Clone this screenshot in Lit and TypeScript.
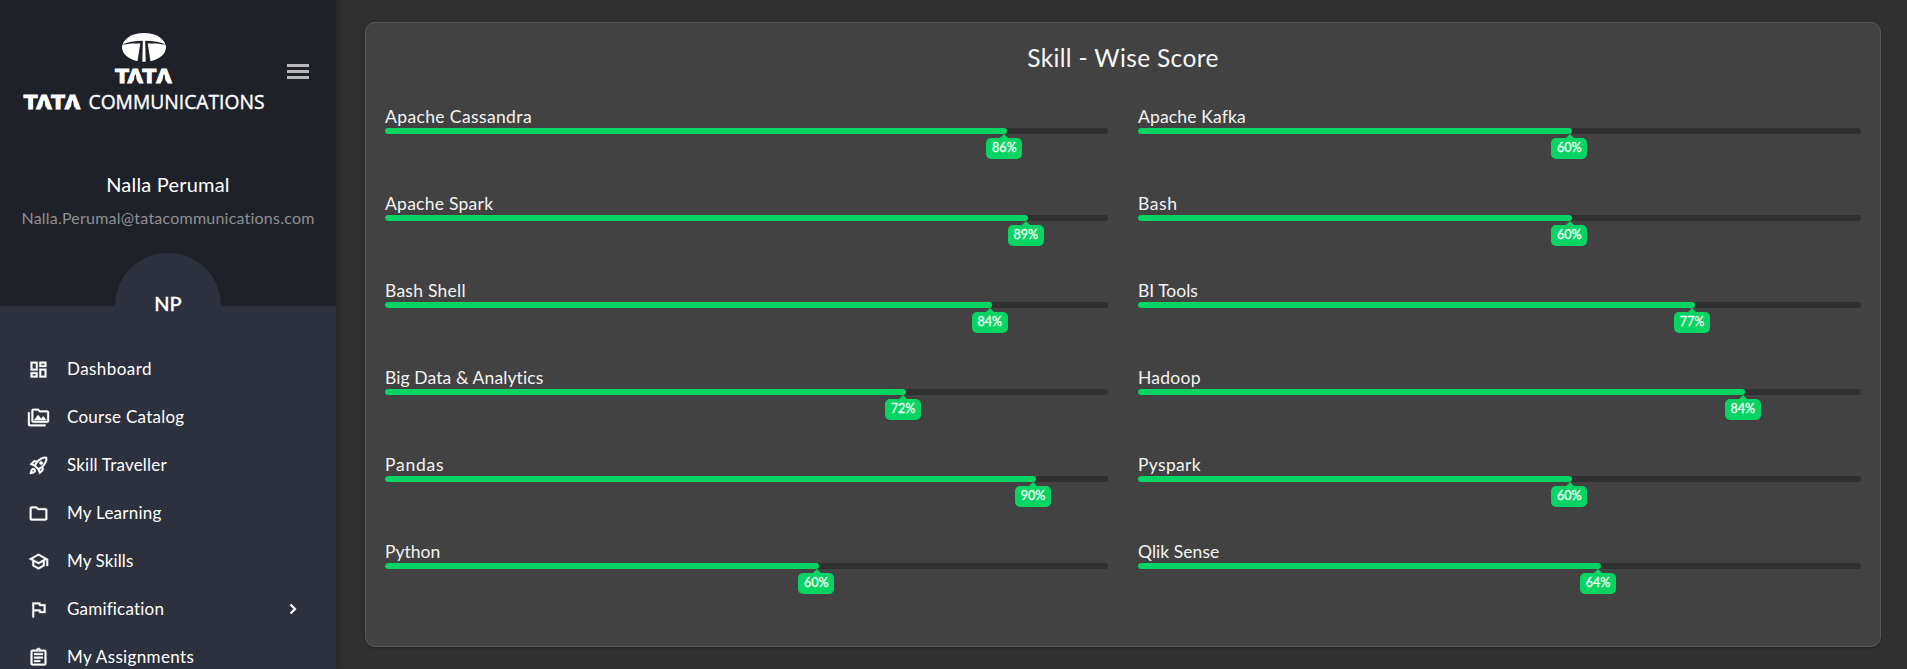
import { LitElement, html, css, svg } from "lit";
import { customElement, property } from "lit/decorators.js";
import { styleMap } from "lit/directives/style-map.js";

const ICONS = {
  dashboard:
    "M19 5v2h-4V5h4M9 5v6H5V5h4m10 8v6h-4v-6h4M9 17v2H5v-2h4M21 3h-8v6h8V3zM11 3H3v10h8V3zm10 8h-8v10h8V11zm-10 4H3v6h8v-6z",
  catalog:
    "M2 6H0v5h.01L0 20c0 1.1.9 2 2 2h18v-2H2V6zm5 9h14l-3.5-4.5-2.5 3.01L11.5 9zM22 4h-8l-2-2H6c-1.1 0-1.99.9-1.99 2L4 16c0 1.1.9 2 2 2h16c1.1 0 2-.9 2-2V6c0-1.1-.9-2-2-2zm0 12H6V4h5.17l1.41 1.41.59.59H22v10z",
  rocket:
    "M6 15c-.83 0-1.58.34-2.12.88C2.7 17.06 2 22 2 22s4.94-.7 6.12-1.88A2.996 2.996 0 0 0 6 15zm.71 3.71c-.28.28-2.17.76-2.17.76s.47-1.88.76-2.17c.17-.19.42-.3.7-.3a1.003 1.003 0 0 1 .71 1.71zm10.71-5.06c6.36-6.36 4.24-11.31 4.24-11.31S16.71.22 10.35 6.58l-2.49-.5a2.03 2.03 0 0 0-1.81.55L2 10.69l5 2.14L11.17 17l2.14 5 4.05-4.05c.47-.47.68-1.15.55-1.81l-.49-2.49zM7.41 10.83l-1.91-.82 1.97-1.97 1.44.29c-.57.83-1.08 1.7-1.5 2.5zm6.58 7.67-.82-1.91c.8-.42 1.67-.93 2.49-1.5l.29 1.44-1.96 1.97zM16 12.24c-1.32 1.32-3.38 2.4-4.04 2.73l-2.93-2.93c.32-.65 1.4-2.71 2.73-4.04 4.68-4.68 8.23-3.99 8.23-3.99s.69 3.55-3.99 8.23zM15 11c1.1 0 2-.9 2-2s-.9-2-2-2-2 .9-2 2 .9 2 2 2z",
  folder:
    "M9.17 6l2 2H20v10H4V6h5.17M10 4H4c-1.1 0-1.99.9-1.99 2L2 18c0 1.1.9 2 2 2h16c1.1 0 2-.9 2-2V8c0-1.1-.9-2-2-2h-8l-2-2z",
  school:
    "M12 3L1 9l4 2.18v6L12 21l7-3.82v-6l2-1.09V17h2V9L12 3zm6.82 6L12 12.72 5.18 9 12 5.28 18.82 9zM17 15.99l-5 2.73-5-2.73v-3.72L12 15l5-2.73v3.72z",
  flag:
    "M12.36 6l.4 2H18v6h-3.36l-.4-2H7V6h5.36M14 4H5v17h2v-7h5.6l.4 2h7V6h-5.6L14 4z",
  assignment:
    "M7 15h7v2H7zm0-4h10v2H7zm0-4h10v2H7zm12-4h-4.18C14.4 1.84 13.3 1 12 1s-2.4.84-2.82 2H5c-1.1 0-2 .9-2 2v14c0 1.1.9 2 2 2h14c1.1 0 2-.9 2-2V5c0-1.1-.9-2-2-2zm-7-.25c.41 0 .75.34.75.75s-.34.75-.75.75-.75-.34-.75-.75.34-.75.75-.75zM19 19H5V5h14v14z",
};

interface NavItem {
  label: string;
  icon: keyof typeof ICONS;
  tracking: number;
  nested?: boolean;
}

const NAV: NavItem[] = [
  { label: "Dashboard", icon: "dashboard", tracking: 0.45 },
  { label: "Course Catalog", icon: "catalog", tracking: 0.26 },
  { label: "Skill Traveller", icon: "rocket", tracking: 0.2 },
  { label: "My Learning", icon: "folder", tracking: 0.25 },
  { label: "My Skills", icon: "school", tracking: 0.1 },
  { label: "Gamification", icon: "flag", tracking: 0.2, nested: true },
  { label: "My Assignments", icon: "assignment", tracking: 0.36 },
];

interface Skill {
  name: string;
  score: number;
  tracking: number;
}

const SKILLS: Skill[] = [
  { name: "Apache Cassandra", score: 86, tracking: 0.38 },
  { name: "Apache Kafka", score: 60, tracking: 0.16 },
  { name: "Apache Spark", score: 89, tracking: 0.26 },
  { name: "Bash", score: 60, tracking: 0.6 },
  { name: "Bash Shell", score: 84, tracking: 0.25 },
  { name: "BI Tools", score: 77, tracking: 0 },
  { name: "Big Data & Analytics", score: 72, tracking: 0.11 },
  { name: "Hadoop", score: 84, tracking: 0.25 },
  { name: "Pandas", score: 90, tracking: 0.75 },
  { name: "Pyspark", score: 60, tracking: 0.32 },
  { name: "Python", score: 60, tracking: 0 },
  { name: "Qlik Sense", score: 64, tracking: 0.05 },
];

/** Crossbar-free wordmark: the notches open each A down to its baseline. */
const wordmark = (x: number, y: number) => svg`
  <g transform="translate(${x} ${y})">
    <text class="tata" x="-0.2 12.2 27.2 40.8" y="14.4">TATA</text>
    <path class="notch" d="M19.9 5.6L22.3 15H17.5zM48.5 5.6L50.9 15H46.1z" />
  </g>`;

@customElement("brand-logo")
class BrandLogo extends LitElement {
  static styles = css`
    :host { display: block; width: 244px; height: 84px; }
    svg { display: block; overflow: visible; }
    .white { fill: #fff; }
    .notch { fill: #1f2129; }
    .tata { font: 700 20px "DejaVu Sans", sans-serif; fill: #fff; stroke: #fff; stroke-width: 1; }
    .name { font: 400 20px "Open Sans", sans-serif; fill: #fff; stroke: #fff; stroke-width: 0.4; }
  `;
  render() {
    return html`<svg width="244" height="92" viewBox="0 0 244 92" role="img" aria-label="Tata Communications">
      <ellipse class="white" cx="120" cy="22.4" rx="22" ry="14.4" />
      <path class="notch" d="M96 20.4C103 17 111 15.8 118.8 15.8L118.3 38H113.2L116.3 18.6C109 18.2 103 18.6 96 20.4z" />
      <path class="notch" d="M144 20.4C137 17 129 15.8 121.2 15.8L121.7 38H126.8L123.7 18.6C131 18.2 137 18.6 144 20.4z" />
      ${wordmark(91.4, 43.5)} ${wordmark(0, 69.5)}
      <text class="name" x="64.5" y="84" textLength="176" lengthAdjust="spacingAndGlyphs">COMMUNICATIONS</text>
    </svg>`;
  }
}

@customElement("side-nav")
class SideNav extends LitElement {
  static styles = css`
    :host {
      display: flex; flex-direction: column; flex: none; width: 336px; height: 100%;
      overflow: hidden; background: #2d313d; color: #fff;
    }
    header {
      display: flex; flex-direction: column; align-items: center; flex: none;
      height: 306px; box-sizing: border-box; background: #1f2129;
    }
    .top { display: flex; align-self: stretch; padding: 25px 27px 0 24px; height: 109px; box-sizing: border-box; }
    .top svg { flex: none; margin: 39px 0 0 19px; fill: #bababc; }
    .user { margin-top: 63px; font-size: 20px; line-height: 24px; letter-spacing: 0.2px; }
    .email { margin-top: 12px; font-size: 16px; line-height: 20px; letter-spacing: 0.22px; color: #8f9094; }
    .avatar {
      display: flex; align-items: center; justify-content: center; flex: none;
      width: 106px; height: 106px; margin-top: 25px; padding-bottom: 6px; box-sizing: border-box;
      border-radius: 50%; background: #2d313d;
      font-size: 20px; font-weight: 500; -webkit-text-stroke: 0.3px #fff;
    }
    nav { display: flex; flex-direction: column; padding-top: 39px; }
    .item {
      display: flex; align-items: center; flex: none; height: 48px;
      padding: 0 37px 0 28px; font-size: 17px; line-height: 24px;
    }
    .icon { width: 21px; height: 21px; fill: #fff; stroke: #fff; stroke-width: 0.4; margin-right: 18px; overflow: visible; }
    .label { flex: 1; white-space: nowrap; }
    .chevron { fill: none; stroke: #fff; stroke-width: 2.2; }
  `;
  render() {
    return html`
      <header>
        <div class="top">
          <brand-logo></brand-logo>
          <svg width="22" height="15" viewBox="0 0 22 15"><path d="M0 0h22v3H0zM0 6h22v3H0zM0 12h22v3H0z" /></svg>
        </div>
        <div class="user">Nalla Perumal</div>
        <div class="email">Nalla.Perumal@tatacommunications.com</div>
        <div class="avatar">NP</div>
      </header>
      <nav>
        ${NAV.map(
          (n) => html`<div class="item">
            <svg class="icon" viewBox="0 0 24 24"><path fill-rule="evenodd" d=${ICONS[n.icon]} /></svg>
            <span class="label" style=${styleMap({ letterSpacing: `${n.tracking}px` })}>${n.label}</span>
            ${n.nested
              ? html`<svg class="chevron" width="10" height="12" viewBox="0 0 10 12"><path d="M1.5 1.5L6 6 1.5 10.5" /></svg>`
              : null}
          </div>`
        )}
      </nav>
    `;
  }
}

@customElement("skill-bar")
class SkillBar extends LitElement {
  @property({ attribute: false }) skill!: Skill;

  static styles = css`
    :host { display: block; height: 87px; }
    .name { height: 24px; font-size: 17.5px; line-height: 25px; color: #f4f4f4; white-space: nowrap; }
    .track { height: 6px; border-radius: 3px; background: #303030; }
    .fill { position: relative; height: 6px; border-radius: 3px; background: #07d462; }
    .badge {
      position: absolute; top: 9.6px; right: -15.6px; width: 36.4px; height: 21.6px; border-radius: 5px;
      background: #07d462; color: #f4fff8;
      font-size: 12.5px; line-height: 20px; text-align: center; -webkit-text-stroke: 0.3px #f4fff8;
    }
    .badge::before {
      content: ""; position: absolute; left: 13.5px; top: -4px;
      border: solid transparent; border-width: 0 5px 5px; border-bottom-color: #07d462;
    }
  `;
  render() {
    const { name, score, tracking } = this.skill;
    return html`
      <div class="name" style=${styleMap({ letterSpacing: `${tracking}px` })}>${name}</div>
      <div class="track">
        <div class="fill" style=${styleMap({ width: `${score}%` })}><span class="badge">${score}%</span></div>
      </div>
    `;
  }
}

@customElement("app-root")
class AppRoot extends LitElement {
  static styles = css`
    :host {
      display: flex; width: 100%; height: 100vh; overflow: hidden;
      background: #303030; font-family: Lato, sans-serif;
    }
    side-nav { position: relative; z-index: 1; box-shadow: 0 0 8px 2px rgba(0, 0, 0, 0.25); }
    main { flex: 1; padding: 22px 26px 22px 29px; box-sizing: border-box; }
    .card {
      height: 625px; box-sizing: border-box; padding: 0 19px; border: 1px solid #5a5a5a;
      border-radius: 10px; background: #424242; box-shadow: 0 1px 3px rgba(0, 0, 0, 0.3);
    }
    h1 {
      margin: 0; padding: 19px 0 22px; font-size: 24.5px; line-height: 32px; font-weight: 400;
      letter-spacing: 0.35px; text-align: center; color: #f7f7f7;
    }
    .grid { display: grid; grid-template-columns: 1fr 1fr; column-gap: 30px; padding-top: 8px; }
  `;
  render() {
    return html`
      <side-nav></side-nav>
      <main>
        <section class="card">
          <h1>Skill - Wise Score</h1>
          <div class="grid">${SKILLS.map((s) => html`<skill-bar .skill=${s}></skill-bar>`)}</div>
        </section>
      </main>
    `;
  }
}
